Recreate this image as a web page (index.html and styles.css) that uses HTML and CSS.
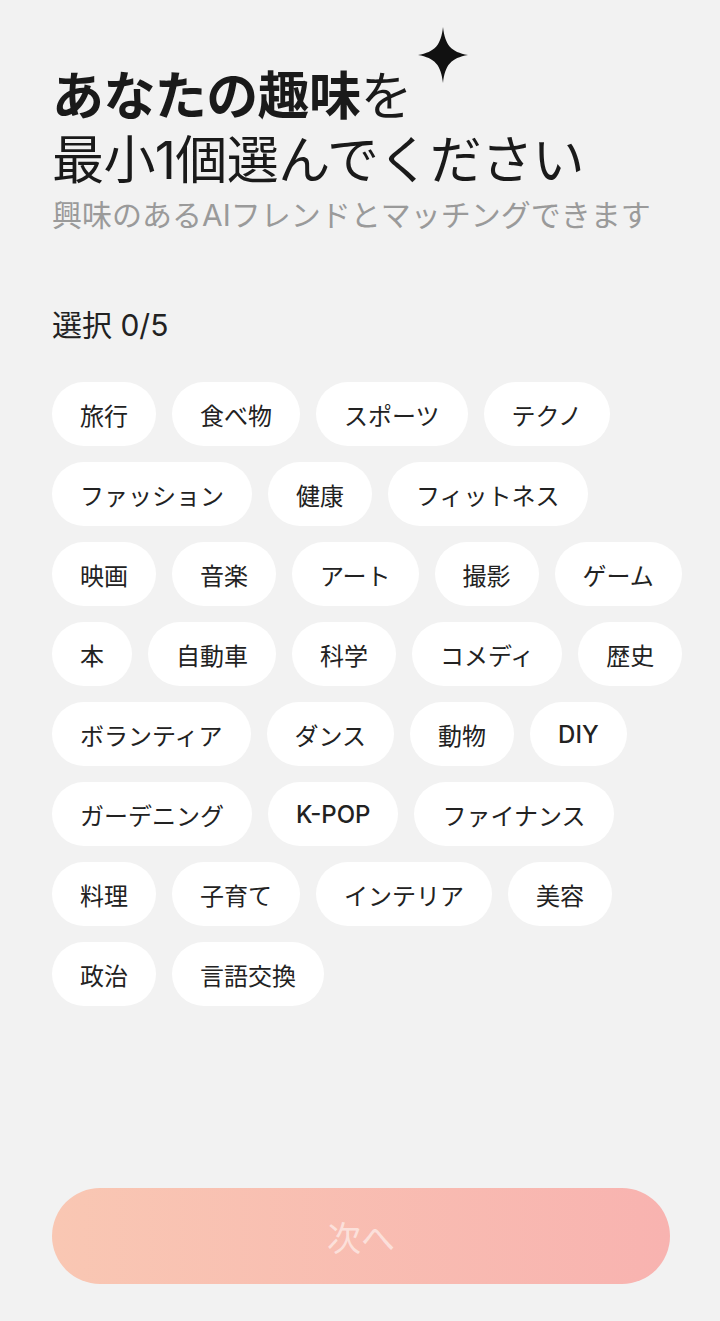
FILE: index.html
```html
<!DOCTYPE html>
<html lang="ja">
	<head>
		<meta charset="UTF-8">
		<meta name="viewport" content="width=device-width,initial-scale=1">
		<title>趣味を選択</title>
		<link rel="stylesheet" href="styles.css">
	</head>
	<body>
		<div id="wrap">
			<div class="main">
				<div class="head">
					<h1 class="title"><b>あなたの趣味</b>を<br>最小1個選んでください</h1>
					<svg class="spark" width="50" height="56" viewBox="0 0 50 56">
						<path d="M25 0C27 18 33 25 50 28C33 31 27 38 25 56C23 38 17 31 0 28C17 25 23 18 25 0Z" fill="#111"/>
					</svg>
					<p class="sub">興味のあるAIフレンドとマッチングできます</p>
				</div>
				<div class="count">選択 0/5</div>
				<ul class="chips">
					<li>旅行</li>
					<li>食べ物</li>
					<li>スポーツ</li>
					<li>テクノ</li>
					<li>ファッション</li>
					<li>健康</li>
					<li>フィットネス</li>
					<li>映画</li>
					<li>音楽</li>
					<li>アート</li>
					<li>撮影</li>
					<li>ゲーム</li>
					<li>本</li>
					<li>自動車</li>
					<li>科学</li>
					<li>コメディ</li>
					<li>歴史</li>
					<li>ボランティア</li>
					<li>ダンス</li>
					<li>動物</li>
					<li class="latin">DIY</li>
					<li>ガーデニング</li>
					<li class="latin">K-POP</li>
					<li>ファイナンス</li>
					<li>料理</li>
					<li>子育て</li>
					<li>インテリア</li>
					<li>美容</li>
					<li>政治</li>
					<li>言語交換</li>
				</ul>
			</div>
			<button class="next" disabled>次へ</button>
		</div>
	</body>
</html>
```

FILE: styles.css
```css
body{
	margin: 0;
	background: #f2f2f2;
	font-family: Inter, "Noto Sans CJK JP", sans-serif;
	color: #1a1a1a;
}

#wrap{
	height: 100vh;
	display: flex;
	flex-direction: column;
	padding: 65px 20px 37px 52px;
	box-sizing: border-box;
}
.main{
	flex: 1;
}

/* 見出し */
.head{
	position: relative;
}
.title{
	margin: 0;
	font-size: 52px;
	line-height: 64px;
	font-weight: 400;
	letter-spacing: -0.6px;
}
.title b{
	font-weight: 700;
}
.spark{
	position: absolute;
	left: 366px;
	top: -38px;
}
.sub{
	margin: 2px 0 0;
	font-size: 30px;
	line-height: 40px;
	color: #9a9a9a;
}

.count{
	margin-top: 70px;
	font-size: 30px;
	line-height: 40px;
	color: #222;
}

/* 趣味タグ */
.chips{
	margin: 37px 0 0;
	padding: 0;
	list-style: none;
	display: flex;
	flex-wrap: wrap;
	gap: 16px;
}
.chips li{
	height: 64px;
	padding: 0 28px;
	display: flex;
	align-items: center;
	background: #fff;
	border-radius: 32px;
	font-size: 24px;
	color: #222;
}
.chips li.latin{
	font-weight: 500;
}

.next{
	width: 618px;
	height: 96px;
	border: 0;
	border-radius: 48px;
	background: linear-gradient(90deg, #f9c7b3, #f8b3b0);
	color: rgba(255,255,255,0.55);
	font-family: inherit;
	font-size: 34px;
	padding: 0;
}
```
